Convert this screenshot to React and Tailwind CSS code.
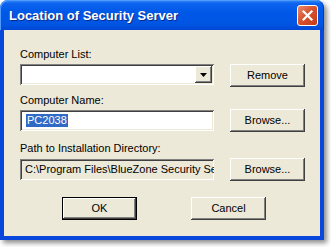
import React from "react";

const btn =
  "flex items-center justify-center w-[75px] h-[23px] bg-[#ece9d8] text-black shadow-[inset_-1px_-1px_#404040,inset_1px_1px_#ffffff,inset_-2px_-2px_#808080]";
const sunken =
  "shadow-[inset_1px_1px_#808080,inset_-1px_-1px_#ffffff,inset_2px_2px_#404040,inset_-2px_-2px_#ece9d8]";

export default function App() {
  return (
    <div
      className="w-[331px] h-[247px] bg-white overflow-hidden"
      style={{ fontFamily: '"Liberation Sans", Arial, sans-serif' }}
    >
      <div className="w-[324px] h-[240px] flex flex-col rounded-t-[8px] shadow-[3px_3px_5px_rgba(0,0,0,0.45)]">
        {/* Title bar */}
        <div className="h-[30px] shrink-0 flex items-center justify-between pl-[9px] pr-[6px] rounded-t-[8px] bg-[linear-gradient(180deg,#3a8cf6_0%,#0b63ee_12%,#0058e8_40%,#0055e3_80%,#0048d6_100%)] shadow-[inset_1px_1px_#4f9bff,inset_-1px_0_#0038c8]">
          <span className="text-white font-bold text-[13px] leading-none [text-shadow:1px_1px_#0a2a8a] tracking-[0px]">
            Location of Security Server
          </span>
          <div className="w-[21px] h-[21px] rounded-[3px] border border-white bg-[linear-gradient(135deg,#e98a6c_0%,#d9532f_45%,#c43a17_100%)] flex items-center justify-center">
            <svg width="13" height="13" viewBox="0 0 13 13">
              <path d="M2.5 2.5 L10.5 10.5 M10.5 2.5 L2.5 10.5" stroke="white" strokeWidth="2.2" strokeLinecap="square" />
            </svg>
          </div>
        </div>
        {/* Body */}
        <div className="flex-1 bg-[#ece9d8] border-x-[4px] border-b-[4px] border-[#0846dc] flex flex-col pl-[16px] text-[11px] leading-[13px] text-black">
          <div className="mt-[18px]">Computer List:</div>
          <div className="mt-[3px] flex items-start gap-[16px]">
            <div className={`w-[194px] h-[21px] bg-white relative ${sunken}`}>
              <div className="absolute right-[2px] top-[2px] w-[17px] h-[17px] bg-[#ece9d8] flex items-center justify-center shadow-[inset_-1px_-1px_#404040,inset_1px_1px_#ffffff,inset_-2px_-2px_#808080]">
                <svg width="7" height="4" viewBox="0 0 7 4">
                  <path d="M0 0 H7 L3.5 4 Z" fill="black" />
                </svg>
              </div>
            </div>
            <div className={btn}>Remove</div>
          </div>
          <div className="mt-[7px]">Computer Name:</div>
          <div className="mt-[2px] flex items-start gap-[16px]">
            <div className={`w-[194px] h-[21px] mt-[1px] bg-white flex items-center pl-[6px] ${sunken}`}>
              <span className="bg-[#316ac5] text-white px-[1px] leading-[13px]">PC2038</span>
            </div>
            <div className={btn}>Browse...</div>
          </div>
          <div className="mt-[10px]">Path to Installation Directory:</div>
          <div className="mt-[3px] flex items-start gap-[16px]">
            <div className={`w-[194px] h-[21px] mt-[1px] bg-[#ece9d8] flex items-center pl-[5px] overflow-hidden whitespace-nowrap ${sunken}`}>
              <span>C:\Program Files\BlueZone Security Server</span>
            </div>
            <div className={btn}>Browse...</div>
          </div>
          <div className="mt-[16px] flex pl-[42px] gap-[54px]">
            <div className="w-[75px] h-[23px] bg-[#ece9d8] flex items-center justify-center shadow-[inset_0_0_0_1px_#000000,inset_-2px_-2px_#404040,inset_2px_2px_#ffffff,inset_-3px_-3px_#808080]">
              OK
            </div>
            <div className={btn}>Cancel</div>
          </div>
        </div>
      </div>
    </div>
  );
}
